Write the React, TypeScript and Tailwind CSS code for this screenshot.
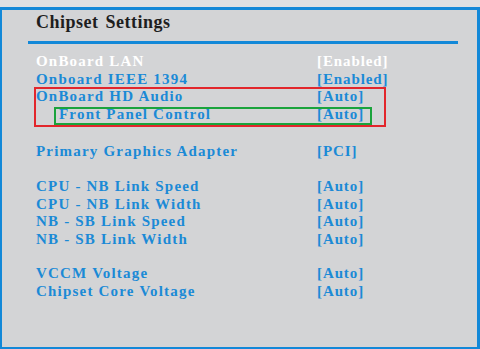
import React from 'react'

type Row = { label: string; value: string; indent?: boolean; active?: boolean } | { gap: string }

const rows: Row[] = [
  { label: 'OnBoard LAN', value: '[Enabled]', active: true },
  { label: 'Onboard IEEE 1394', value: '[Enabled]' },
  { label: 'OnBoard HD Audio', value: '[Auto]' },
  { label: 'Front Panel Control', value: '[Auto]', indent: true },
  { gap: 'h-[19.5px]' },
  { label: 'Primary Graphics Adapter', value: '[PCI]' },
  { gap: 'h-[17.6px]' },
  { label: 'CPU - NB Link Speed', value: '[Auto]' },
  { label: 'CPU - NB Link Width', value: '[Auto]' },
  { label: 'NB - SB Link Speed', value: '[Auto]' },
  { label: 'NB - SB Link Width', value: '[Auto]' },
  { gap: 'h-[16.5px]' },
  { label: 'VCCM Voltage', value: '[Auto]' },
  { label: 'Chipset Core Voltage', value: '[Auto]' },
]

const App: React.FC = () => {
  return (
    <div
      className="w-[480px] h-[349px] overflow-hidden bg-[#dde0e3] pt-[7px]"
      style={{ fontFamily: '"Liberation Serif", "Times New Roman", serif' }}
    >
      <div className="relative h-[342px] border-t-[3px] border-l-[2px] border-r-[3px] border-b-[2px] border-[#1288d8] bg-[#d3d4d6]">
        {/* Header */}
        <div className="pl-[34px] mt-[2px] text-[18px] leading-[20px] font-bold tracking-[0.5px] text-[#1e1e1e] [word-spacing:2px]">
          Chipset Settings
        </div>
        <div className="ml-[26px] mt-[9px] w-[430px] h-[3px] bg-[#1288d8]" />

        {/* Settings list */}
        <div className="mt-[9px] pl-[34px]">
          {rows.map((row, i) =>
            'gap' in row ? (
              <div key={i} className={row.gap} />
            ) : (
              <div
                key={i}
                className={`grid grid-cols-[281px_1fr] text-[15px] leading-[17.6px] font-bold ${
                  row.active ? 'text-white' : 'text-[#1b8ad6]'
                }`}
              >
                <span className={`tracking-[1.2px] ${row.indent ? 'pl-[23px]' : ''}`}>{row.label}</span>
                <span className="tracking-[0.9px]">{row.value}</span>
              </div>
            )
          )}
        </div>

        {/* Highlight boxes */}
        <div className="absolute left-[32px] top-[77px] w-[352px] h-[40px] border-2 border-[#e2262c]" />
        <div className="absolute left-[52px] top-[97px] w-[318px] h-[18px] border-2 border-[#1aa33c]" />
      </div>
    </div>
  )
}

export default App
